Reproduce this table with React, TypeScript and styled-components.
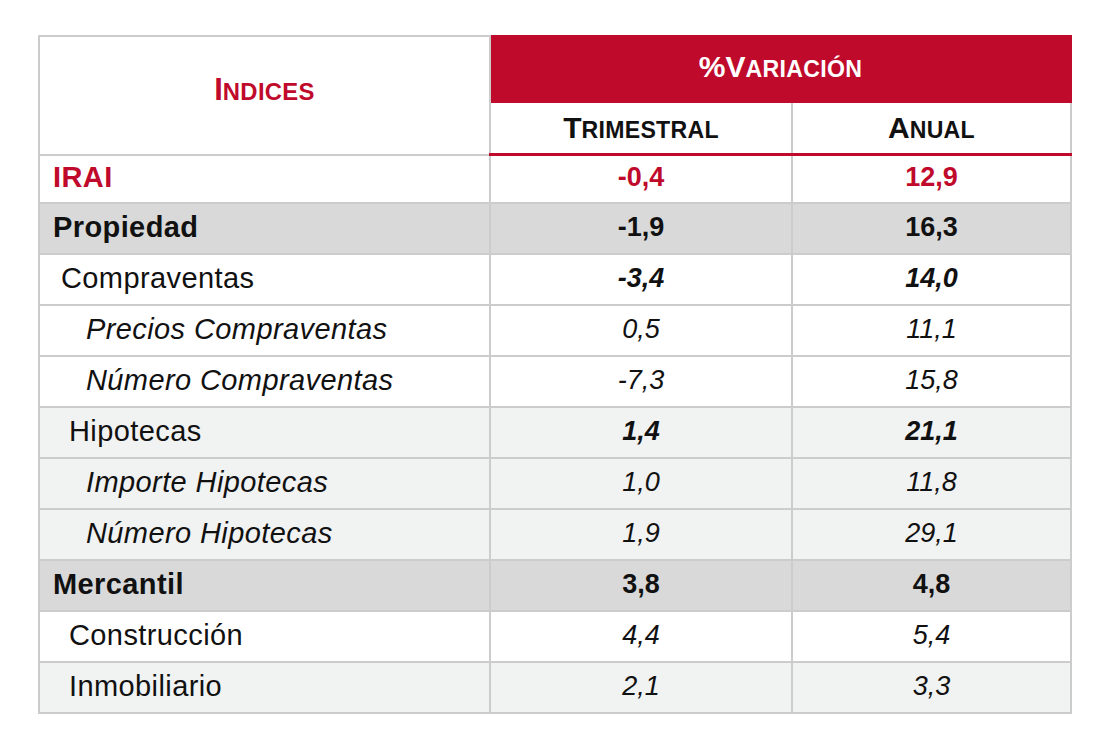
import React from 'react';
import styled, { createGlobalStyle } from 'styled-components';

const RED = '#bf0a2b';
const GRID = '#cccccc';

const GlobalStyle = createGlobalStyle`
  html, body {
    margin: 0;
    padding: 0;
    background: #ffffff;
  }
  body {
    font-family: "Liberation Sans", Arial, Helvetica, sans-serif;
    color: #111111;
  }
`;

const Page = styled.div`
  padding: 35px 0 0 38px;
`;

const Table = styled.table`
  width: 1032px;
  border-collapse: collapse;
  table-layout: fixed;
  border: 2px solid ${GRID};
`;

const TitleCell = styled.th`
  border: 2px solid ${GRID};
  color: ${RED};
  font-size: 31px;
  font-weight: 700;
  text-align: center;
  vertical-align: middle;
  padding: 0 0 10px;
`;

const BandCell = styled.th`
  height: 60px;
  background: ${RED};
  border: 2px solid ${RED};
  color: #ffffff;
  font-size: 30px;
  font-weight: 700;
  text-align: center;
  vertical-align: middle;
  padding: 0 0 4px;
`;

const SubHeadCell = styled.th`
  height: 50px;
  border: 2px solid ${GRID};
  border-top: none;
  border-bottom: 3px solid ${RED};
  font-size: 30px;
  font-weight: 700;
  text-align: center;
  vertical-align: middle;
  padding: 0;
`;

const Small = styled.span`
  font-size: 0.77em;
  letter-spacing: 0.3px;
`;

const Row = styled.tr<{ $bg: string; $h: number }>`
  background: ${p => p.$bg};
  height: ${p => p.$h}px;
`;

const LabelCell = styled.td<{ $indent: number; $bold?: boolean; $italic?: boolean; $red?: boolean }>`
  border: 2px solid ${GRID};
  padding: 0 0 2px ${p => p.$indent}px;
  font-size: 29px;
  letter-spacing: 0.4px;
  font-weight: ${p => (p.$bold ? 700 : 400)};
  font-style: ${p => (p.$italic ? 'italic' : 'normal')};
  color: ${p => (p.$red ? RED : '#111111')};
  white-space: nowrap;
  vertical-align: middle;
`;

const ValueCell = styled.td<{ $bold?: boolean; $italic?: boolean; $red?: boolean }>`
  border: 2px solid ${GRID};
  padding: 0 0 2px;
  font-size: 27px;
  text-align: center;
  font-weight: ${p => (p.$bold ? 700 : 400)};
  font-style: ${p => (p.$italic ? 'italic' : 'normal')};
  color: ${p => (p.$red ? RED : '#111111')};
  vertical-align: middle;
`;

type Level = 'total' | 'group' | 'sub' | 'leaf';

interface IndexRow {
  label: string;
  quarter: string;
  year: string;
  level: Level;
  bg: string;
  boldValues?: boolean;
  italicValues?: boolean;
  indent: number;
}

const WHITE = '#ffffff';
const DARK = '#d9d9d9';
const LIGHT = '#f1f2f2';

const rows: IndexRow[] = [
  { label: 'IRAI', quarter: '-0,4', year: '12,9', level: 'total', bg: WHITE, boldValues: true, indent: 13 },
  { label: 'Propiedad', quarter: '-1,9', year: '16,3', level: 'group', bg: DARK, boldValues: true, indent: 13 },
  { label: 'Compraventas', quarter: '-3,4', year: '14,0', level: 'sub', bg: WHITE, boldValues: true, italicValues: true, indent: 21 },
  { label: 'Precios Compraventas', quarter: '0,5', year: '11,1', level: 'leaf', bg: WHITE, italicValues: true, indent: 46 },
  { label: 'Número Compraventas', quarter: '-7,3', year: '15,8', level: 'leaf', bg: WHITE, italicValues: true, indent: 46 },
  { label: 'Hipotecas', quarter: '1,4', year: '21,1', level: 'sub', bg: LIGHT, boldValues: true, italicValues: true, indent: 29 },
  { label: 'Importe Hipotecas', quarter: '1,0', year: '11,8', level: 'leaf', bg: LIGHT, italicValues: true, indent: 46 },
  { label: 'Número Hipotecas', quarter: '1,9', year: '29,1', level: 'leaf', bg: LIGHT, italicValues: true, indent: 46 },
  { label: 'Mercantil', quarter: '3,8', year: '4,8', level: 'group', bg: DARK, boldValues: true, indent: 13 },
  { label: 'Construcción', quarter: '4,4', year: '5,4', level: 'sub', bg: WHITE, italicValues: true, indent: 29 },
  { label: 'Inmobiliario', quarter: '2,1', year: '3,3', level: 'sub', bg: LIGHT, italicValues: true, indent: 29 },
];

const App: React.FC = () => {
  return (
    <Page>
      <GlobalStyle />
      <Table>
        <colgroup>
          <col style={{ width: 451 }} />
          <col style={{ width: 302 }} />
          <col style={{ width: 279 }} />
        </colgroup>
        <thead>
          <tr>
            <TitleCell rowSpan={2}>
              I<Small>NDICES</Small>
            </TitleCell>
            <BandCell colSpan={2}>
              %V<Small>ARIACIÓN</Small>
            </BandCell>
          </tr>
          <tr>
            <SubHeadCell>
              T<Small>RIMESTRAL</Small>
            </SubHeadCell>
            <SubHeadCell>
              A<Small>NUAL</Small>
            </SubHeadCell>
          </tr>
        </thead>
        <tbody>
          {rows.map((row, i) => {
            const isRed = row.level === 'total';
            return (
              <Row key={row.label} $bg={row.bg} $h={i === 0 ? 48 : 51}>
                <LabelCell
                  $indent={row.indent}
                  $bold={row.level === 'total' || row.level === 'group'}
                  $italic={row.level === 'leaf'}
                  $red={isRed}
                >
                  {row.label}
                </LabelCell>
                <ValueCell $bold={row.boldValues} $italic={row.italicValues} $red={isRed}>
                  {row.quarter}
                </ValueCell>
                <ValueCell $bold={row.boldValues} $italic={row.italicValues} $red={isRed}>
                  {row.year}
                </ValueCell>
              </Row>
            );
          })}
        </tbody>
      </Table>
    </Page>
  );
};

export default App;
